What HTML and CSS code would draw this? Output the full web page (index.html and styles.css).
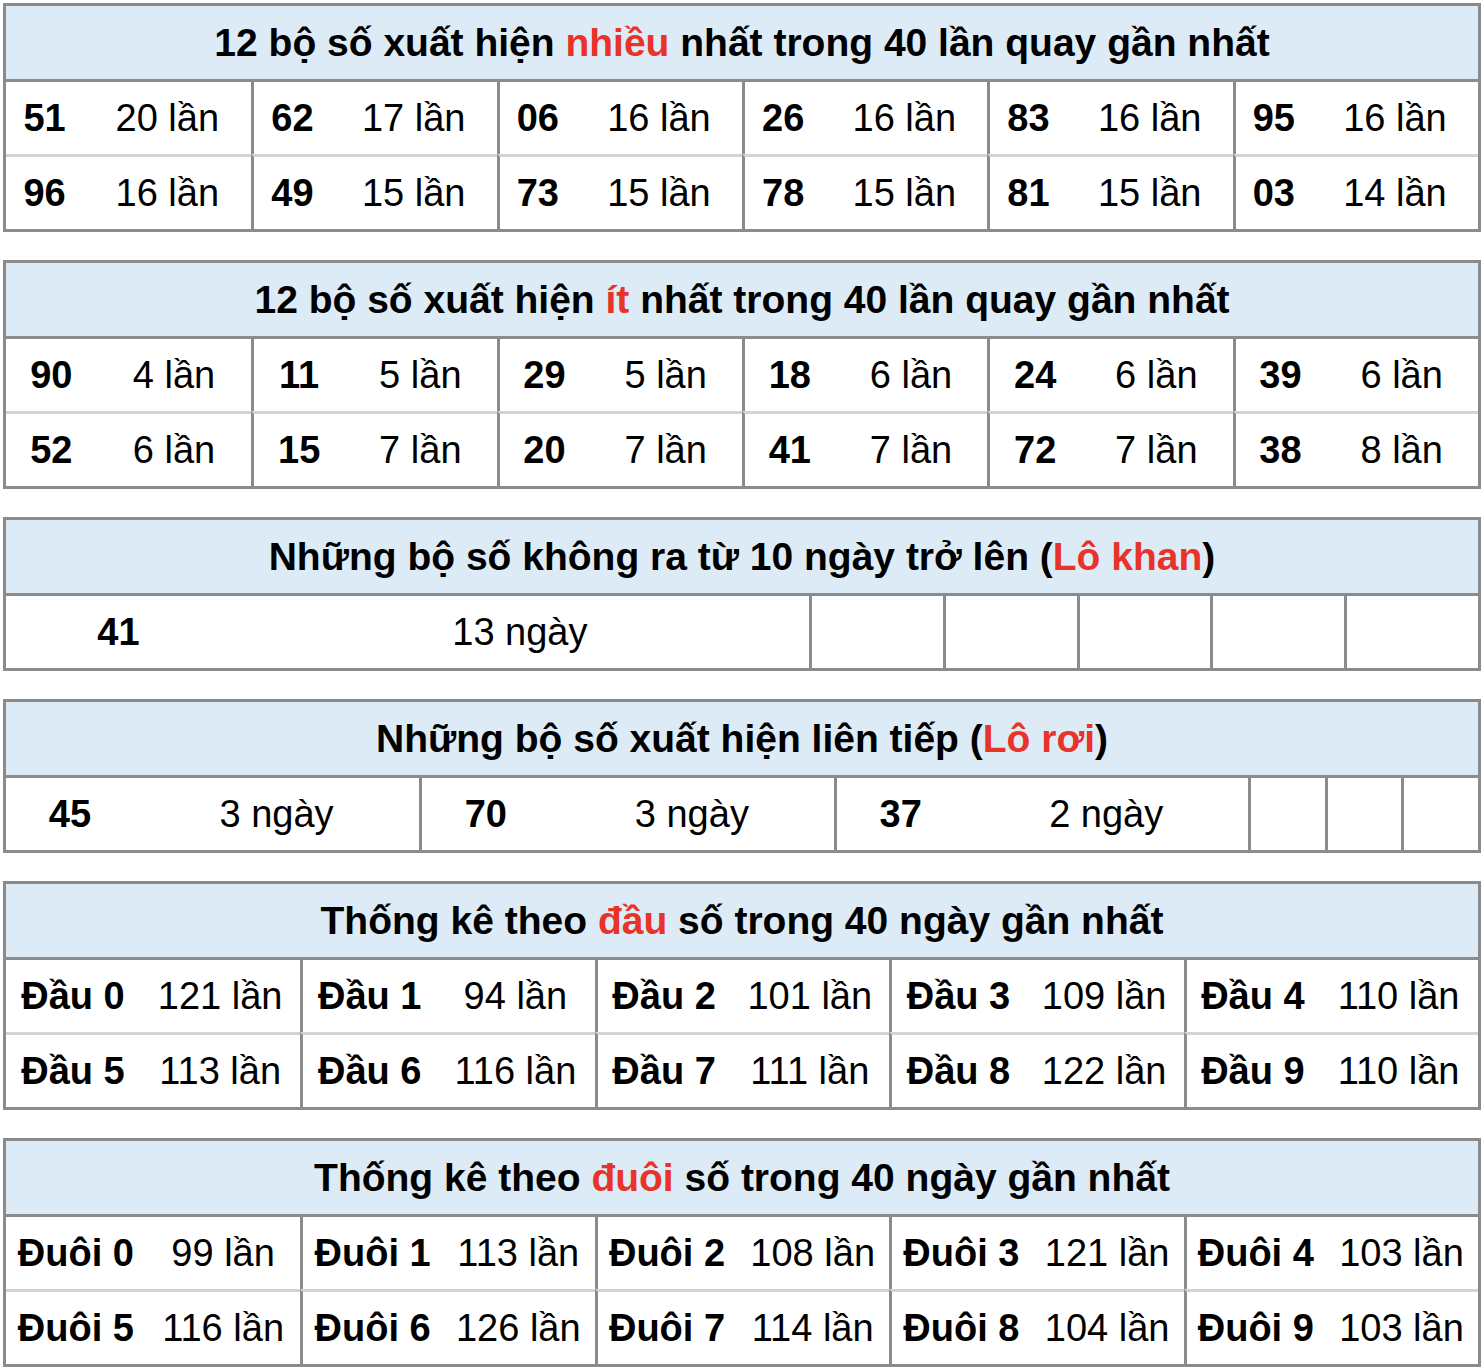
FILE: index.html
```html
<!DOCTYPE html>
<html lang="vi">
<head>
<meta charset="utf-8">
<title>Thống kê lô tô</title>
<link rel="stylesheet" href="styles.css">
</head>
<body>
<div class="page">

  <section class="tbl">
    <div class="hdr"><h2 class="title">12 bộ số xuất hiện <span class="red">nhiều</span> nhất trong 40 lần quay gần nhất</h2></div>
    <div class="grid g6 pair-a">
      <div class="cell"><b>51</b><span>20 lần</span></div>
      <div class="cell"><b>62</b><span>17 lần</span></div>
      <div class="cell"><b>06</b><span>16 lần</span></div>
      <div class="cell"><b>26</b><span>16 lần</span></div>
      <div class="cell"><b>83</b><span>16 lần</span></div>
      <div class="cell"><b>95</b><span>16 lần</span></div>
      <div class="cell row2"><b>96</b><span>16 lần</span></div>
      <div class="cell row2"><b>49</b><span>15 lần</span></div>
      <div class="cell row2"><b>73</b><span>15 lần</span></div>
      <div class="cell row2"><b>78</b><span>15 lần</span></div>
      <div class="cell row2"><b>81</b><span>15 lần</span></div>
      <div class="cell row2"><b>03</b><span>14 lần</span></div>
    </div>
  </section>

  <section class="tbl">
    <div class="hdr"><h2 class="title">12 bộ số xuất hiện <span class="red">ít</span> nhất trong 40 lần quay gần nhất</h2></div>
    <div class="grid g6 pair-b">
      <div class="cell"><b>90</b><span>4 lần</span></div>
      <div class="cell"><b>11</b><span>5 lần</span></div>
      <div class="cell"><b>29</b><span>5 lần</span></div>
      <div class="cell"><b>18</b><span>6 lần</span></div>
      <div class="cell"><b>24</b><span>6 lần</span></div>
      <div class="cell"><b>39</b><span>6 lần</span></div>
      <div class="cell row2"><b>52</b><span>6 lần</span></div>
      <div class="cell row2"><b>15</b><span>7 lần</span></div>
      <div class="cell row2"><b>20</b><span>7 lần</span></div>
      <div class="cell row2"><b>41</b><span>7 lần</span></div>
      <div class="cell row2"><b>72</b><span>7 lần</span></div>
      <div class="cell row2"><b>38</b><span>8 lần</span></div>
    </div>
  </section>

  <section class="tbl">
    <div class="hdr"><h2 class="title">Những bộ số không ra từ 10 ngày trở lên (<span class="red">Lô khan</span>)</h2></div>
    <div class="grid gkhan pair-c">
      <div class="cell"><b>41</b><span>13 ngày</span></div>
      <div class="cell"></div>
      <div class="cell"></div>
      <div class="cell"></div>
      <div class="cell"></div>
      <div class="cell"></div>
    </div>
  </section>

  <section class="tbl">
    <div class="hdr"><h2 class="title">Những bộ số xuất hiện liên tiếp (<span class="red">Lô rơi</span>)</h2></div>
    <div class="grid groi pair-d">
      <div class="cell"><b>45</b><span>3 ngày</span></div>
      <div class="cell"><b>70</b><span>3 ngày</span></div>
      <div class="cell"><b>37</b><span>2 ngày</span></div>
      <div class="cell"></div>
      <div class="cell"></div>
      <div class="cell"></div>
    </div>
  </section>

  <section class="tbl">
    <div class="hdr"><h2 class="title">Thống kê theo <span class="red">đầu</span> số trong 40 ngày gần nhất</h2></div>
    <div class="grid g5 pair-e">
      <div class="cell"><b>Đầu 0</b><span>121 lần</span></div>
      <div class="cell"><b>Đầu 1</b><span>94 lần</span></div>
      <div class="cell"><b>Đầu 2</b><span>101 lần</span></div>
      <div class="cell"><b>Đầu 3</b><span>109 lần</span></div>
      <div class="cell"><b>Đầu 4</b><span>110 lần</span></div>
      <div class="cell row2"><b>Đầu 5</b><span>113 lần</span></div>
      <div class="cell row2"><b>Đầu 6</b><span>116 lần</span></div>
      <div class="cell row2"><b>Đầu 7</b><span>111 lần</span></div>
      <div class="cell row2"><b>Đầu 8</b><span>122 lần</span></div>
      <div class="cell row2"><b>Đầu 9</b><span>110 lần</span></div>
    </div>
  </section>

  <section class="tbl">
    <div class="hdr"><h2 class="title">Thống kê theo <span class="red">đuôi</span> số trong 40 ngày gần nhất</h2></div>
    <div class="grid g5 pair-f">
      <div class="cell"><b>Đuôi 0</b><span>99 lần</span></div>
      <div class="cell"><b>Đuôi 1</b><span>113 lần</span></div>
      <div class="cell"><b>Đuôi 2</b><span>108 lần</span></div>
      <div class="cell"><b>Đuôi 3</b><span>121 lần</span></div>
      <div class="cell"><b>Đuôi 4</b><span>103 lần</span></div>
      <div class="cell row2"><b>Đuôi 5</b><span>116 lần</span></div>
      <div class="cell row2"><b>Đuôi 6</b><span>126 lần</span></div>
      <div class="cell row2"><b>Đuôi 7</b><span>114 lần</span></div>
      <div class="cell row2"><b>Đuôi 8</b><span>104 lần</span></div>
      <div class="cell row2"><b>Đuôi 9</b><span>103 lần</span></div>
    </div>
  </section>

</div>
</body>
</html>
```

FILE: styles.css
```css
html, body {
  margin: 0;
  padding: 0;
  background: #ffffff;
}

body {
  font-family: "Liberation Sans", Arial, Helvetica, sans-serif;
  color: #000000;
}

.page {
  padding: 3px 3px 0 3px;
  display: flex;
  flex-direction: column;
  gap: 28px;
}

.tbl {
  border: 3px solid #8b8b8b;
}

.hdr {
  height: 73px;
  background: #ddebf7;
  border-bottom: 3px solid #8b8b8b;
  display: flex;
  align-items: center;
  justify-content: center;
}

.title {
  margin: 0;
  font-weight: bold;
  font-size: 39px;
  white-space: nowrap;
  text-align: center;
}

.red {
  color: #e8332a;
}

.grid {
  display: grid;
}

.g6 { grid-template-columns: repeat(6, 1fr); }
.g5 { grid-template-columns: repeat(5, 1fr); }
.gkhan { grid-template-columns: 803px repeat(5, 1fr); }
.groi { grid-template-columns: 413px 415px 414px repeat(3, 1fr); }

.cell {
  height: 72px;
  display: grid;
  align-items: center;
  font-size: 38px;
  white-space: nowrap;
  border-left: 3px solid #8b8b8b;
}

.cell b,
.cell span {
  text-align: center;
}

.g6 .cell:nth-child(6n+1),
.g5 .cell:nth-child(5n+1),
.gkhan .cell:first-child,
.groi .cell:first-child {
  border-left: none;
}

.cell.row2 {
  border-top: 3px solid #d4d4d4;
}

.pair-a .cell { grid-template-columns: 31.5% 68.5%; }
.pair-b .cell { grid-template-columns: 37% 63%; }
.pair-c .cell { grid-template-columns: 28% 72%; }
.pair-d .cell { grid-template-columns: 31% 69%; }
.pair-e .cell { grid-template-columns: 45.5% 54.5%; }
.pair-f .cell { grid-template-columns: 47.5% 52.5%; }
```
